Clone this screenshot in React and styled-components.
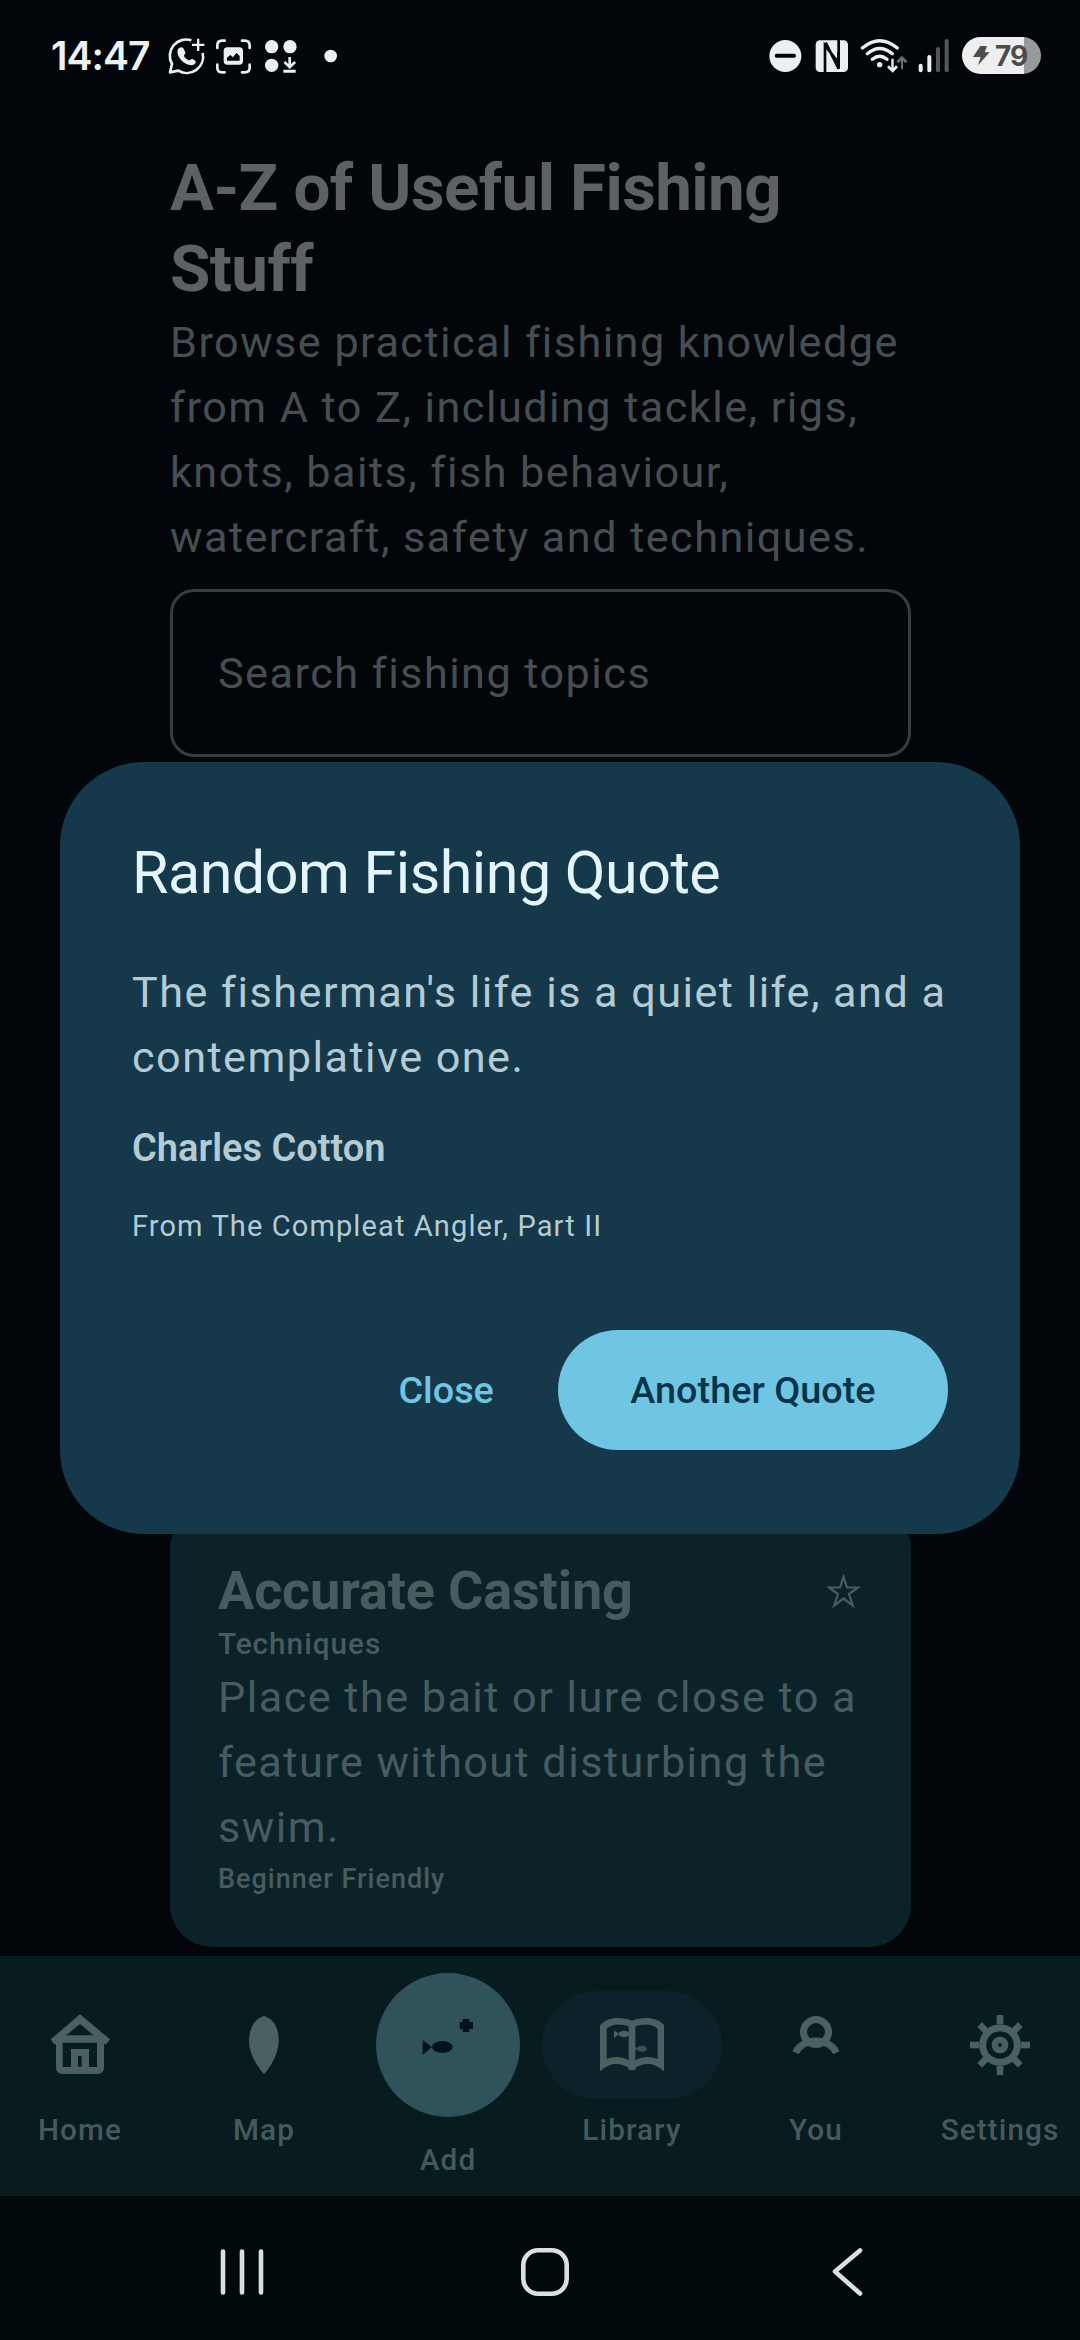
import React, { useState } from "react";
import styled, { createGlobalStyle } from "styled-components";

const GlobalStyle = createGlobalStyle`
  * {
    box-sizing: border-box;
  }

  body {
    margin: 0;
    background: #02060a;
    font-family: Roboto, "Liberation Sans", sans-serif;
  }

  h1, h2, h3, p {
    margin: 0;
  }

  svg {
    display: block;
    flex-shrink: 0;
  }
`;

const Screen = styled.div`
  position: relative;
  display: flex;
  flex-direction: column;
  width: 1080px;
  height: 2340px;
  overflow: hidden;
  background: #02060a;
`;

const StatusBar = styled.header`
  display: flex;
  justify-content: space-between;
  height: 112px;
  padding: 20px 39px 0 51px;
`;

const StatusGroup = styled.div`
  display: flex;
  align-items: flex-start;
`;

const Clock = styled.span`
  width: 114px;
  font-family: Inter, sans-serif;
  font-size: 39px;
  font-weight: 600;
  line-height: 72px;
  letter-spacing: -1px;
  color: #eef1f2;
`;

const Battery = styled.div`
  display: flex;
  align-items: center;
  width: 79px;
  height: 37px;
  margin: 17px 0 0 7px;
  padding-left: 11px;
  border-radius: 19px;
  background: linear-gradient(to right, #eeeeee 78.5%, #97999a 78.5%);
  font-family: Inter, sans-serif;
  font-size: 28px;
  font-weight: 700;
  letter-spacing: -1px;
  color: #4b4c4d;
`;

const Main = styled.main`
  display: flex;
  flex-direction: column;
  height: 1844px;
  padding: 35px 169px 9px 170px;
`;

const PageTitle = styled.h1`
  margin-bottom: 1px;
  font-size: 65.5px;
  font-weight: 700;
  line-height: 81px;
  letter-spacing: -0.6px;
  color: #5c6163;
`;

const BodyText = styled.p`
  font-size: 43.2px;
  line-height: 65px;
  letter-spacing: 1.47px;
  white-space: pre-line;
  color: ${(props) => props.$color || "#464e51"};
`;

const SearchBox = styled.div`
  display: flex;
  align-items: center;
  height: 168px;
  margin-top: 19px;
  padding: 0 45px;
  border: 3px solid #343e3f;
  border-radius: 24px;
`;

const Card = styled.article`
  display: flex;
  flex-direction: column;
  margin-top: auto;
  padding: 51px 48px 48px;
  border-radius: 42px;
  background: #0c2229;
`;

const CardHeader = styled.div`
  display: flex;
  justify-content: space-between;
  align-items: center;
  padding-right: 3px;
`;

const CardTitle = styled.h2`
  font-size: 54px;
  font-weight: 700;
  line-height: 65px;
  letter-spacing: -0.15px;
  color: #485c5f;
`;

const Meta = styled.span`
  font-size: ${(props) => (props.$small ? "27px" : "29.7px")};
  font-weight: 500;
  line-height: ${(props) => (props.$small ? "39px" : "42px")};
  letter-spacing: 1px;
  color: #485c5f;
`;

const TabBar = styled.nav`
  display: flex;
  gap: 24px;
  height: 240px;
  background: #081c1f;
`;

const Tab = styled.a`
  display: flex;
  flex-direction: column;
  align-items: center;
  width: 160px;
  padding-top: ${(props) => (props.$raised ? "17px" : "35px")};
`;

const TabIcon = styled.div`
  display: flex;
  align-items: center;
  justify-content: center;
  flex-shrink: 0;
  width: ${(props) => (props.$raised ? "144px" : "180px")};
  height: ${(props) => (props.$raised ? "144px" : "108px")};
  margin-bottom: ${(props) => (props.$raised ? "21px" : "9px")};
  border-radius: 72px;
  background: ${(props) =>
    props.$raised ? "#2f525b" : props.$active ? "#0c222b" : "transparent"};
`;

const TabLabel = styled.span`
  font-size: 29.7px;
  font-weight: 500;
  line-height: 43px;
  letter-spacing: 1.1px;
  color: #465a5c;
`;

const SystemBar = styled.footer`
  display: flex;
  align-items: center;
  height: 144px;
  padding: 8px 216px 0 218px;
  justify-content: space-between;
  background: #02090b;
`;

const HomeKey = styled.div`
  margin-right: 9px;
`;

const Overlay = styled.div`
  position: absolute;
  inset: 0;
  display: flex;
  justify-content: center;
  align-items: flex-start;
  padding-top: 762px;
`;

const Dialog = styled.section`
  display: flex;
  flex-direction: column;
  width: 960px;
  height: 772px;
  padding: 72px 72px 84px;
  border-radius: 84px;
  background: #16384b;
`;

const DialogTitle = styled.h2`
  margin-bottom: 49px;
  font-size: 59.2px;
  font-weight: 400;
  line-height: 77px;
  letter-spacing: -0.5px;
  color: #e4f5fd;
`;

const Author = styled.h3`
  margin: 31px 0 30px;
  font-size: 38px;
  font-weight: 600;
  line-height: 54px;
  color: #b4cbd4;
`;

const Source = styled.p`
  font-size: 29px;
  line-height: 43px;
  letter-spacing: 1.12px;
  color: #b4cbd4;
`;

const Actions = styled.div`
  display: flex;
  justify-content: flex-end;
  gap: 28px;
  margin-top: auto;
`;

const Button = styled.button`
  height: 120px;
  padding: 0 ${(props) => (props.$filled ? "72.5px" : "36px")};
  border: none;
  border-radius: 60px;
  background: ${(props) => (props.$filled ? "#70c5e2" : "transparent")};
  color: ${(props) => (props.$filled ? "#04344a" : "#70c5e2")};
  font-family: inherit;
  font-size: 37.8px;
  font-weight: 500;
`;

const ICON = "#4a6163";

const StatusIcon = ({ x, w, children }) => (
  <svg width={w / 3} height="75" viewBox={`${x} 0 ${w} 225`} fill="#eceff0">
    {children}
  </svg>
);

const NavIcon = ({ x, children }) => (
  <svg width="72" height="72" viewBox={`${x - 108} 177 216 216`} fill={ICON}>
    {children}
  </svg>
);

const HomeIcon = () => (
  <NavIcon x={240}>
    <path
      fillRule="evenodd"
      d="M240 193L330 268L317 284L312 281V352Q312 372 292 372H188Q168 372 168 352V281L163 284L152 268ZM240 222L198 256H281ZM188 278V351H213V297H267V351H291V278ZM234 318V350H245V318Z"
    />
  </NavIcon>
);

const MapIcon = () => (
  <NavIcon x={792}>
    <path d="M792 198C825 208 837 240 836 275C833 320 810 350 792 373C774 350 750 320 747 275C747 240 759 208 792 198Z" />
  </NavIcon>
);

const AddIcon = () => (
  <NavIcon x={264}>
    <g fill="#02121c">
      <ellipse cx="247" cy="291" rx="31" ry="18" />
      <path d="M188 270L216 291L188 314Z" />
      <path d="M308 207H328V216H339V237H328V246H308V237H299V216H308Z" />
    </g>
  </NavIcon>
);

const LibraryIcon = () => (
  <NavIcon x={816}>
    <path
      fillRule="evenodd"
      d="M720 226C735 210 752 204 772 204C790 204 803 207 816 212C829 207 842 204 860 204C880 204 897 210 912 225V364C897 350 880 342 862 342C850 342 838 346 826 354V360H806V354C794 346 782 342 770 342C752 342 735 350 720 364ZM740 236C758 220 782 222 806 229V331C785 319 760 318 740 327ZM893 236C875 220 850 222 826 229V331C848 319 872 318 893 327Z"
    />
    <ellipse cx="792" cy="252" rx="16" ry="10" />
    <path d="M762 241L778 252L762 264Z" />
    <g opacity="0.75">
      <ellipse cx="846" cy="296" rx="15" ry="9" />
      <path d="M824 288L833 296L824 304Z" />
    </g>
  </NavIcon>
);

const YouIcon = () => (
  <NavIcon x={258}>
    <g fill="none" stroke={ICON} strokeWidth="21">
      <circle cx="258" cy="246" r="37.5" />
      <path d="M197 308C218 261 298 261 319 308" />
    </g>
  </NavIcon>
);

const SettingsIcon = () => (
  <NavIcon x={810}>
    <circle cx="810" cy="285" r="52" fill="none" stroke={ICON} strokeWidth="21" />
    <circle cx="810" cy="285" r="15.5" fill="none" stroke={ICON} strokeWidth="19" />
    {[0, 90, 180, 270].map((deg) => (
      <rect key={deg} x="800" y="195" width="20" height="27" transform={`rotate(${deg} 810 285)`} />
    ))}
    {[45, 135, 225, 315].map((deg) => (
      <rect key={deg} x="800" y="199" width="20" height="25" transform={`rotate(${deg} 810 285)`} />
    ))}
  </NavIcon>
);

const StarIcon = () => (
  <svg width="33" height="34" viewBox="0 0 33 34" fill="none" stroke="#485c5f" strokeWidth="2.2">
    <path d="M16.5 3L20 13.5H31L22 20L25.8 31.5L16.5 24.5L7.2 31.5L11 20L2 13.5H13Z" />
  </svg>
);

const tabs = [
  { label: "Home", icon: HomeIcon },
  { label: "Map", icon: MapIcon },
  { label: "Add", icon: AddIcon, raised: true },
  { label: "Library", icon: LibraryIcon },
  { label: "You", icon: YouIcon },
  { label: "Settings", icon: SettingsIcon },
];

const App = () => {
  const [open, setOpen] = useState(true);
  const [active, setActive] = useState("Library");

  return (
    <>
      <GlobalStyle />
      <Screen>
        <StatusBar>
          <StatusGroup>
            <Clock>14:47</Clock>
            <StatusIcon x={405} w={135}>
              <path
                fill="none"
                stroke="#eceff0"
                strokeWidth="8"
                strokeLinejoin="round"
                d="M484 61A49 49 0 0 0 426 132L420 157L445 152A49 49 0 0 0 518 99"
              />
              <path d="M501 56H508V71H523V78H508V93H501V78H486V71H501Z" />
              <path d="M443 90C446 81 456 80 460 85L466 97C468 102 461 105 462 108C465 114 470 118 476 121C480 122 483 115 488 117L496 122C500 126 494 134 488 135C467 139 438 112 443 90Z" />
            </StatusIcon>
            <StatusIcon x={540} w={140}>
              <path
                fill="none"
                stroke="#eceff0"
                strokeWidth="8"
                strokeLinecap="round"
                d="M562 84V76Q562 62 576 62H584M636 62H644Q659 62 659 76V84M659 134V143Q659 157 644 157H636M584 157H576Q562 157 562 143V134"
              />
              <path
                fillRule="evenodd"
                d="M592 82H628Q639 82 639 93V123Q639 134 628 134H592Q581 134 581 123V93Q581 82 592 82ZM591 122H629V108L619 99L609 112L601 105L591 113Z"
              />
            </StatusIcon>
            <StatusIcon x={680} w={140}>
              <circle cx="724" cy="80" r="20" />
              <circle cx="779" cy="80" r="20" />
              <circle cx="724" cy="136" r="20" />
              <path d="M774 111H782V132L792 123L797 129L778 147L760 129L765 123L774 132ZM759 149H796V158H759Z" />
            </StatusIcon>
            <StatusIcon x={820} w={120}>
              <circle cx="903" cy="108" r="19" />
            </StatusIcon>
          </StatusGroup>
          <StatusGroup>
            <StatusIcon x={45} w={125}>
              <circle cx="100" cy="108" r="48" />
              <rect x="68" y="101" width="64" height="12" rx="6" fill="#02060a" />
            </StatusIcon>
            <StatusIcon x={170} w={140}>
              <rect x="190" y="61" width="97" height="95" rx="13" />
              <path
                fill="none"
                stroke="#02060a"
                strokeWidth="8"
                d="M218 158V76L258 128V98M220 68L259 146V58"
              />
            </StatusIcon>
            <StatusIcon x={310} w={180}>
              <g fill="none" stroke="#eceff0" strokeWidth="10" strokeLinecap="round">
                <path d="M332 84Q384 40 437 84" />
                <path d="M347 101Q384 70 422 101" />
                <path d="M362 118Q384 100 406 118" />
              </g>
              <circle cx="384" cy="134" r="8" />
              <path d="M419 116H426V143L433 136L439 142L423 158L406 142L412 136L419 143Z" />
              <path
                fill="#6a6e70"
                d="M448 148H454V122L462 130L467 124L451 107L434 124L440 130L448 122Z"
              />
            </StatusIcon>
            <StatusIcon x={490} w={119}>
              <rect x="501" y="131" width="12" height="26" rx="6" />
              <rect x="527" y="105" width="12" height="52" rx="6" />
              <rect x="553" y="81" width="12" height="76" rx="6" fill="#54585a" />
              <rect x="579" y="57" width="12" height="100" rx="6" fill="#54585a" />
            </StatusIcon>
            <Battery>
              <svg width="22" height="21" viewBox="0 0 66 63" fill="#4b4c4d">
                <path d="M22 3H42L35 22H50L15 61L23 36H0Z" />
              </svg>
              79
            </Battery>
          </StatusGroup>
        </StatusBar>

        <Main>
          <PageTitle>A-Z of Useful Fishing Stuff</PageTitle>
          <BodyText>
            {"Browse practical fishing knowledge\nfrom A to Z, including tackle, rigs,\nknots, baits, fish behaviour,\nwatercraft, safety and techniques."}
          </BodyText>
          <SearchBox>
            <BodyText>Search fishing topics</BodyText>
          </SearchBox>
          <Card>
            <CardHeader>
              <CardTitle>Accurate Casting</CardTitle>
              <StarIcon />
            </CardHeader>
            <Meta>Techniques</Meta>
            <BodyText $color="#485c5f">
              {"Place the bait or lure close to a\nfeature without disturbing the\nswim."}
            </BodyText>
            <Meta $small>Beginner Friendly</Meta>
          </Card>
        </Main>

        <TabBar>
          {tabs.map(({ label, icon: Icon, raised }) => (
            <Tab key={label} $raised={raised} onClick={() => setActive(label)}>
              <TabIcon $raised={raised} $active={label === active}>
                <Icon />
              </TabIcon>
              <TabLabel>{label}</TabLabel>
            </Tab>
          ))}
        </TabBar>

        <SystemBar>
          <svg width="48" height="48" viewBox="0 0 48 48" stroke="#dcdfe0" strokeWidth="4.6" strokeLinecap="round">
            <path d="M5 3.5V44.5M24 3.5V44.5M43 3.5V44.5" />
          </svg>
          <HomeKey>
            <svg width="50" height="50" viewBox="0 0 50 50" fill="none" stroke="#dcdfe0" strokeWidth="4.6">
              <rect x="3.3" y="3.3" width="43.4" height="43.4" rx="15" />
            </svg>
          </HomeKey>
          <svg width="32" height="50" viewBox="0 0 32 50" fill="none" stroke="#dcdfe0" strokeWidth="4.6" strokeLinecap="round" strokeLinejoin="round">
            <path d="M28 3.5L3 24.5L28 46.5" />
          </svg>
        </SystemBar>

        {open && (
          <Overlay>
            <Dialog>
              <DialogTitle>Random Fishing Quote</DialogTitle>
              <BodyText $color="#b4cbd4">
                {"The fisherman's life is a quiet life, and a\ncontemplative one."}
              </BodyText>
              <Author>Charles Cotton</Author>
              <Source>From The Compleat Angler, Part II</Source>
              <Actions>
                <Button onClick={() => setOpen(false)}>Close</Button>
                <Button $filled>Another Quote</Button>
              </Actions>
            </Dialog>
          </Overlay>
        )}
      </Screen>
    </>
  );
};

export default App;
